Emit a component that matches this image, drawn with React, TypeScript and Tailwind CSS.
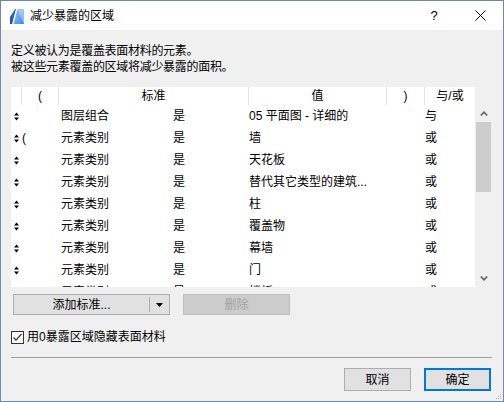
import React from "react";

const FONT = '"Liberation Sans", "Noto Sans CJK SC", sans-serif';

const rows: { p: string; c: string; v: string; a: string }[] = [
  { p: "", c: "图层组合", v: "05 平面图 - 详细的", a: "与" },
  { p: "(", c: "元素类别", v: "墙", a: "或" },
  { p: "", c: "元素类别", v: "天花板", a: "或" },
  { p: "", c: "元素类别", v: "替代其它类型的建筑...", a: "或" },
  { p: "", c: "元素类别", v: "柱", a: "或" },
  { p: "", c: "元素类别", v: "覆盖物", a: "或" },
  { p: "", c: "元素类别", v: "幕墙", a: "或" },
  { p: "", c: "元素类别", v: "门", a: "或" },
  { p: "", c: "元素类别", v: "楼板", a: "或" },
];

function Arrows() {
  return (
    <svg width="5" height="9" viewBox="0 0 5 9">
      <path d="M0 3.5 L2.5 0.5 L5 3.5 Z" fill="#000" />
      <path d="M0 5.5 L2.5 8.5 L5 5.5 Z" fill="#000" />
    </svg>
  );
}

function Logo() {
  return (
    <svg width="16" height="17" viewBox="0 0 16 17">
      <defs>
        <linearGradient id="lg1" x1="0" y1="0" x2="1" y2="1">
          <stop offset="0" stopColor="#9cc7f5" />
          <stop offset="1" stopColor="#3f86e0" />
        </linearGradient>
        <linearGradient id="lg2" x1="0" y1="0" x2="0" y2="1">
          <stop offset="0" stopColor="#2a6fd0" />
          <stop offset="1" stopColor="#1c4fa8" />
        </linearGradient>
      </defs>
      <path d="M1 16 L1 9 L6 1 L7 1 L3 16 Z" fill="url(#lg2)" />
      <path d="M4.5 16 L8.5 1 L15 1 L15 16 Z" fill="url(#lg1)" />
      <path d="M8.5 1 L15 16 L15 1 Z" fill="#bcdcfb" opacity="0.6" />
    </svg>
  );
}

export default function App() {
  return (
    <div
      className="w-[504px] h-[402px] border border-[#6f89a8] bg-[#f0f0f0] flex flex-col overflow-hidden text-[12px] text-black"
      style={{ fontFamily: FONT }}
    >
      {/* Title bar */}
      <div className="h-[29px] bg-white flex items-center shrink-0">
        <div className="ml-[8px] mt-[1px] flex items-center">
          <Logo />
        </div>
        <div className="ml-[5px] text-[12px] leading-[16px]">减少暴露的区域</div>
        <div className="flex-1" />
        <div className="w-[46px] h-full flex items-center justify-center text-[13px] leading-none">?</div>
        <div className="w-[46px] h-full flex items-center justify-center">
          <svg width="11" height="11" viewBox="0 0 11 11">
            <path d="M0.5 0.5 L10.5 10.5 M10.5 0.5 L0.5 10.5" stroke="#000" strokeWidth="1" />
          </svg>
        </div>
      </div>

      {/* Content */}
      <div className="flex-1 flex flex-col pl-[10px] pr-[11px]">
        <div className="mt-[13px] leading-[16px] tracking-[-0.3px]">
          <div>定义被认为是覆盖表面材料的元素。</div>
          <div>被这些元素覆盖的区域将减少暴露的面积。</div>
        </div>

        {/* Table */}
        <div className="mt-[12px] flex h-[200px]">
          <div className="w-[464px] flex flex-col">
            <div className="h-[18px] bg-white grid grid-cols-[10px_37px_190px_138px_38px_51px] items-stretch leading-[18px]">
              <div />
              <div className="border-l border-[#e5e5e5] text-center">(</div>
              <div className="border-l border-[#e5e5e5] text-center">标准</div>
              <div className="border-l border-[#e5e5e5] text-center">值</div>
              <div className="border-l border-[#e5e5e5] text-center">)</div>
              <div className="border-l border-[#e5e5e5] text-center">与/或</div>
            </div>
            <div className="h-[182px] bg-white overflow-hidden">
              {rows.map((r, i) => (
                <div
                  key={i}
                  className="h-[22px] grid grid-cols-[10px_37px_112px_78px_138px_38px_51px] items-center whitespace-nowrap"
                >
                  <div className="pl-[3px] flex items-center">
                    <Arrows />
                  </div>
                  <div className="pl-[1px]">{r.p}</div>
                  <div className="pl-[3px]">{r.c}</div>
                  <div className="pl-[3px]">是</div>
                  <div className="pl-[1px]">{r.v}</div>
                  <div />
                  <div className="pl-[1px]">{r.a}</div>
                </div>
              ))}
            </div>
          </div>
          {/* Scrollbar */}
          <div className="w-[17px] flex flex-col">
            <div className="h-[18px]" />
            <div className="h-[17px] flex items-center justify-center">
              <svg width="8" height="5" viewBox="0 0 8 5">
                <path d="M0.8 4.5 L4 1.2 L7.2 4.5" stroke="#606060" strokeWidth="1.6" fill="none" />
              </svg>
            </div>
            <div className="flex-1 flex flex-col">
              <div className="h-[70px] ml-[1px] w-[15px] bg-[#cdcdcd]" />
            </div>
            <div className="h-[17px] flex items-center justify-center">
              <svg width="8" height="5" viewBox="0 0 8 5">
                <path d="M0.8 0.5 L4 3.8 L7.2 0.5" stroke="#606060" strokeWidth="1.6" fill="none" />
              </svg>
            </div>
          </div>
        </div>

        {/* Buttons row */}
        <div className="mt-[7px] h-[21px] flex">
          <div className="ml-[2px] w-[157px] h-full border border-[#adadad] bg-[#e1e1e1] flex">
            <div className="w-[135px] flex items-center justify-center leading-none">添加标准...</div>
            <div className="w-px my-[2px] bg-[#adadad]" />
            <div className="flex-1 flex items-center justify-center">
              <svg width="7" height="4" viewBox="0 0 7 4">
                <path d="M0 0 L7 0 L3.5 4 Z" fill="#000" />
              </svg>
            </div>
          </div>
          <div className="ml-[13px] w-[107px] h-full border border-[#bfbfbf] bg-[#cccccc] flex items-center justify-center text-[#a3a3a3] leading-none">
            删除
          </div>
        </div>

        {/* Checkbox */}
        <div className="mt-[14px] h-[16px] flex items-center">
          <div className="w-[13px] h-[13px] border border-[#333333] bg-white flex items-center justify-center">
            <svg width="11" height="11" viewBox="0 0 11 11">
              <path d="M1.5 5.5 L4 8.2 L9.5 2" stroke="#333" strokeWidth="1.2" fill="none" />
            </svg>
          </div>
          <div className="ml-[3px] leading-[16px]">用0暴露区域隐藏表面材料</div>
        </div>

        {/* Separator */}
        <div className="mt-[12px] h-px bg-[#a0a0a0]" />

        {/* Bottom buttons */}
        <div className="mt-[10px] h-[23px] flex justify-end pr-[1px]">
          <div className="w-[67px] h-full border border-[#adadad] bg-[#e1e1e1] flex items-center justify-center leading-none">
            取消
          </div>
          <div className="ml-[13px] w-[67px] h-full border-2 border-[#0078d7] bg-[#e1e1e1] flex items-center justify-center leading-none">
            确定
          </div>
        </div>

        <div className="flex-1 relative">
          <svg className="absolute right-[-10px] bottom-[1px]" width="6" height="6" viewBox="0 0 6 6">
            <rect x="4" y="0" width="1" height="1" fill="#b5b5b5" />
            <rect x="2" y="2" width="1" height="1" fill="#b5b5b5" />
            <rect x="4" y="2" width="1" height="1" fill="#b5b5b5" />
            <rect x="0" y="4" width="1" height="1" fill="#b5b5b5" />
            <rect x="2" y="4" width="1" height="1" fill="#b5b5b5" />
            <rect x="4" y="4" width="1" height="1" fill="#b5b5b5" />
          </svg>
        </div>
      </div>
    </div>
  );
}
